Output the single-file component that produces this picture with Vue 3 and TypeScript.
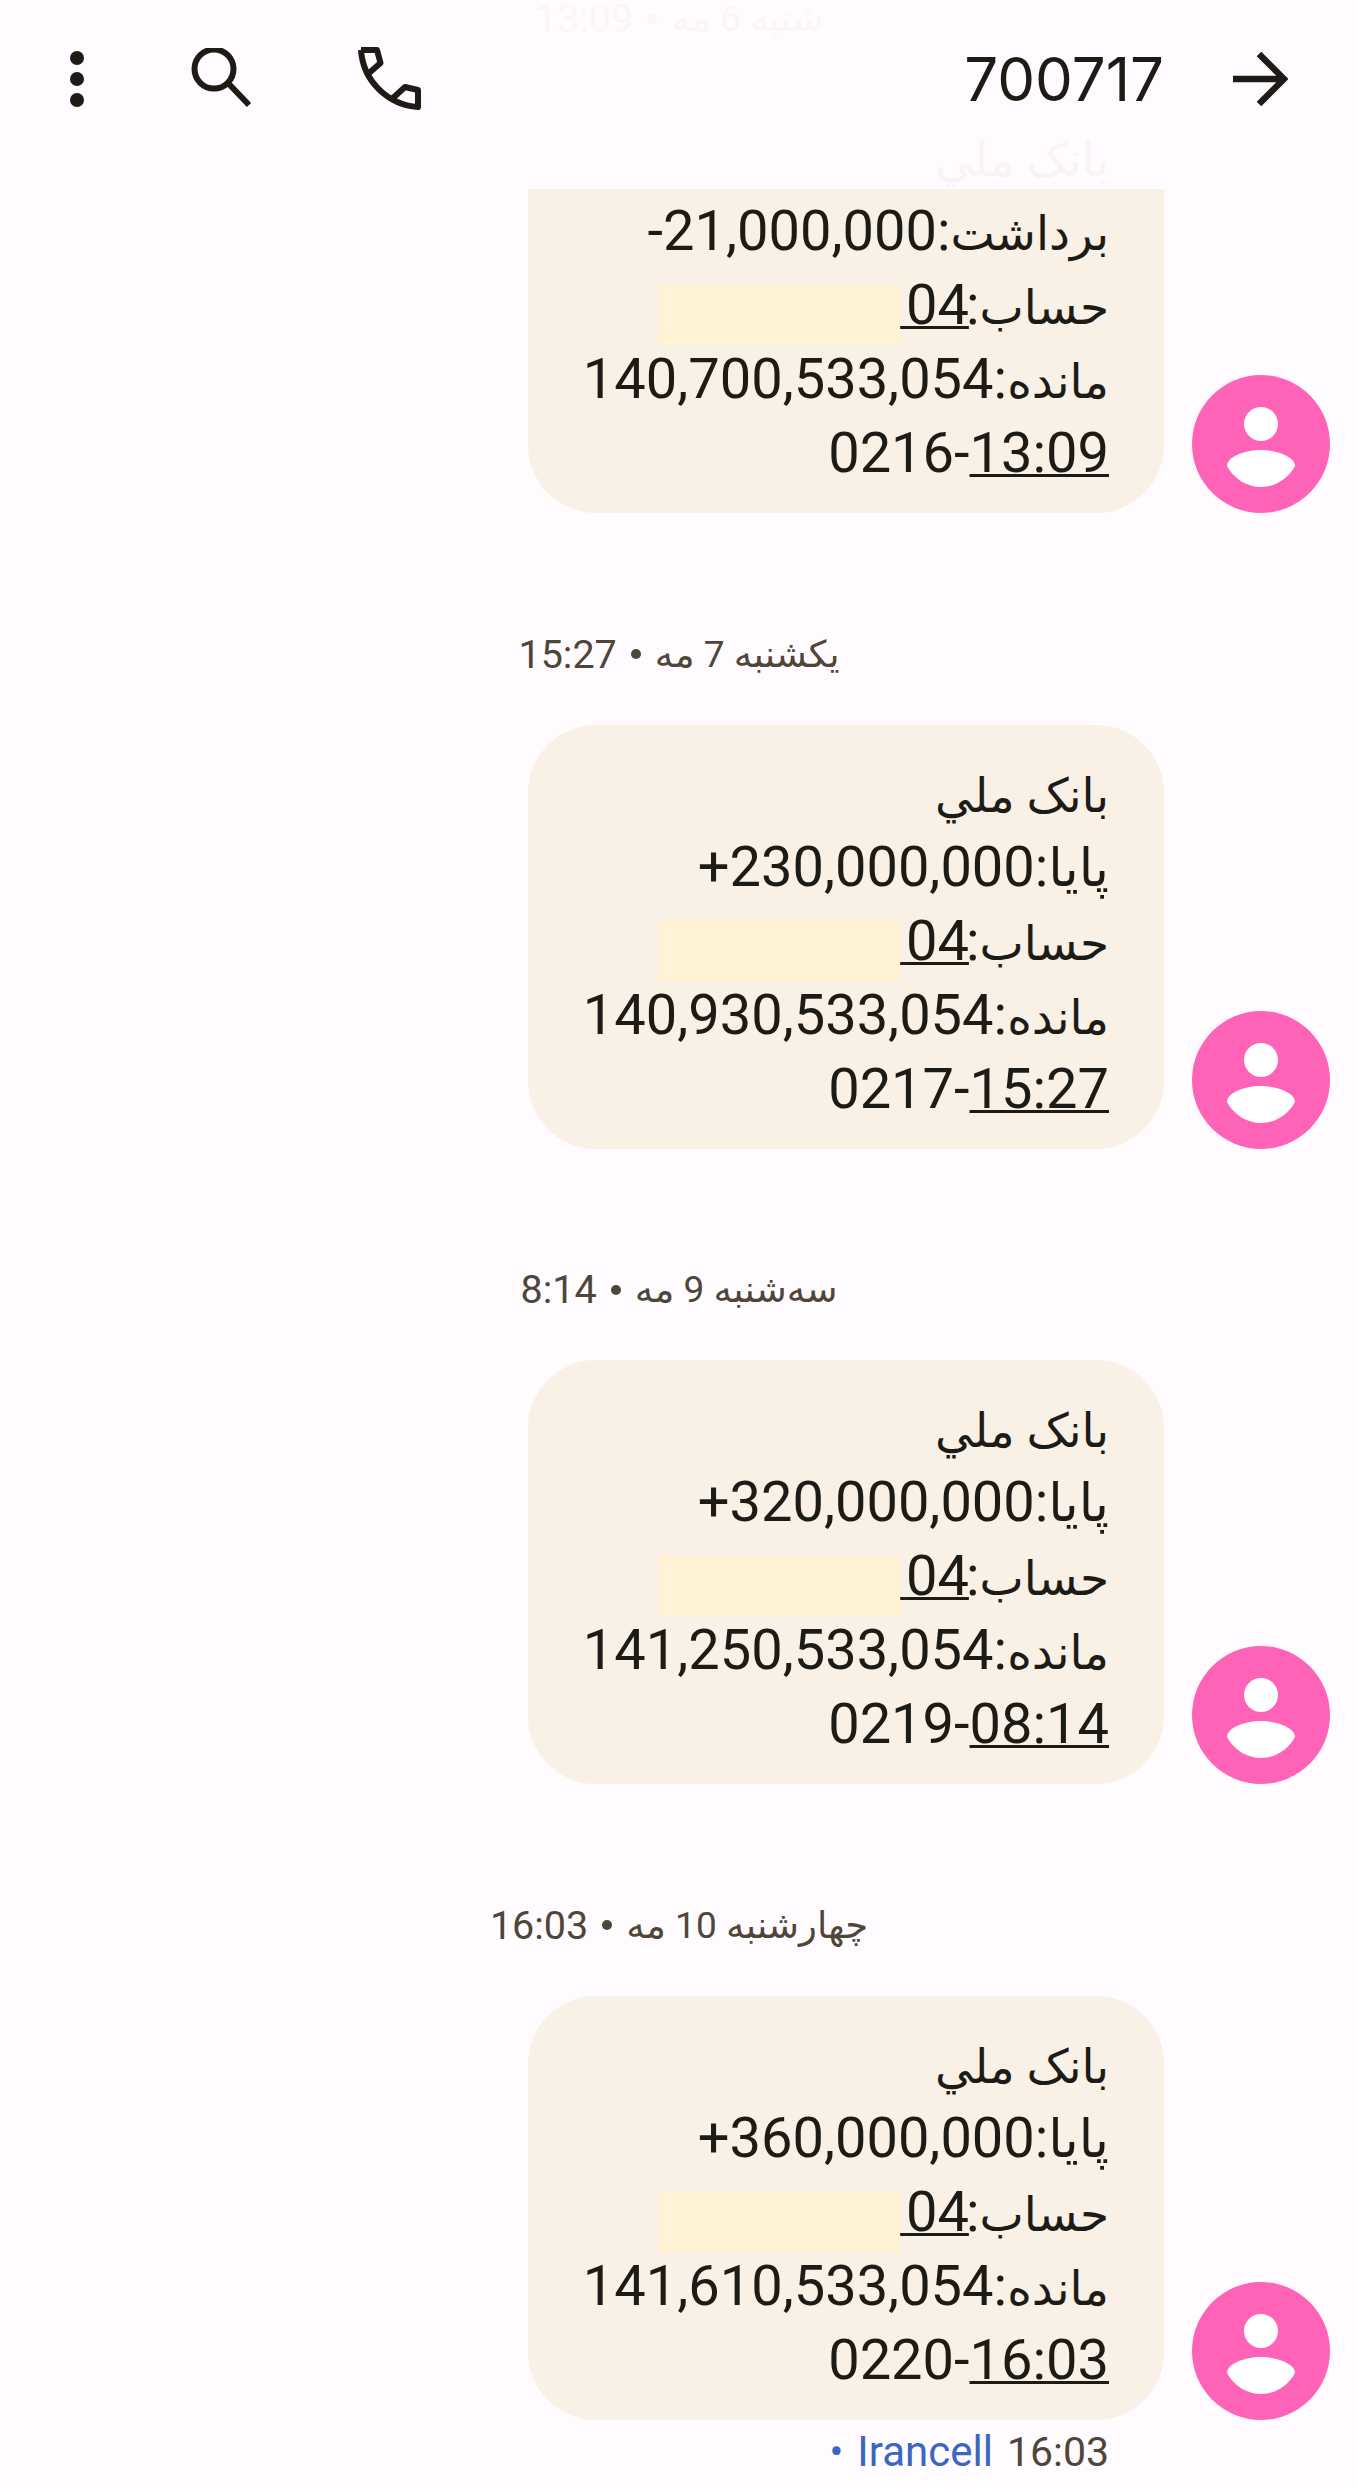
<script setup lang="ts">
interface Message {
  day: string;
  clock: string;
  title: string;
  amount: string;
  balance: string;
  time: string;
  serial: string;
}

const messages: Message[] = [
  { day: 'شنبه 6 مه', clock: '13:09', title: 'برداشت', amount: '21,000,000-', balance: '140,700,533,054', time: '13:09', serial: '0216' },
  { day: 'یکشنبه 7 مه', clock: '15:27', title: 'پايا', amount: '230,000,000+', balance: '140,930,533,054', time: '15:27', serial: '0217' },
  { day: 'سه‌شنبه 9 مه', clock: '8:14', title: 'پايا', amount: '320,000,000+', balance: '141,250,533,054', time: '08:14', serial: '0219' },
  { day: 'چهارشنبه 10 مه', clock: '16:03', title: 'پايا', amount: '360,000,000+', balance: '141,610,533,054', time: '16:03', serial: '0220' },
];
</script>

<template>
  <div class="page">
    <header class="topbar">
      <div class="topbar__actions">
        <svg class="icon" width="14" height="56" viewBox="0 0 14 56" fill="#1d1b16">
          <circle cx="7" cy="7" r="7" />
          <circle cx="7" cy="28" r="7" />
          <circle cx="7" cy="49" r="7" />
        </svg>
        <svg class="icon" width="62" height="62" viewBox="0 0 62 62" fill="none" stroke="#1d1b16" stroke-width="6">
          <circle cx="24" cy="21" r="19.5" />
          <path d="M38 35L59 57" />
        </svg>
        <svg class="icon" width="64" height="64" viewBox="0 0 64 64" fill="none" stroke="#1d1b16" stroke-width="6" stroke-linejoin="round">
          <path d="M3 3C5 34 30 58 60 60V43L47 40 35 51" />
          <path d="M3 3H19L22.5 16 10 27" />
        </svg>
      </div>
      <div class="topbar__title">
        <span class="topbar__number">700717</span>
        <svg class="icon" width="56" height="54" viewBox="0 0 56 54" fill="none" stroke="#1d1b16" stroke-width="6.5">
          <path d="M1 27H51" />
          <path d="M27 2L52 27 27 52" />
        </svg>
      </div>
    </header>

    <section v-for="msg in messages" :key="msg.serial" class="message">
      <div class="message__date" dir="rtl">
        <span>{{ msg.day }}</span>
        <span class="message__dot"></span>
        <span class="message__clock">{{ msg.clock }}</span>
      </div>
      <div class="message__row">
        <div class="bubble" dir="rtl">
          <div><span class="fa">بانک ملي</span></div>
          <div><span class="fa" :class="{ 'fa--wide': msg.title === 'پايا' }">{{ msg.title }}</span>:{{ msg.amount }}</div>
          <div><span class="fa">حساب</span>:<span class="link link--account">04&#8202;</span><span class="redacted"></span></div>
          <div><span class="fa">مانده</span>:{{ msg.balance }}</div>
          <div><span class="link link--isolated">{{ msg.time }}</span>-{{ msg.serial }}</div>
        </div>
        <svg class="avatar" width="138" height="138" viewBox="0 0 138 138">
          <circle cx="69" cy="69" r="69" fill="#ff63b8" />
          <circle cx="69" cy="49" r="17" fill="#fff" />
          <path d="M35 91C35 82 52 75 69 75C86 75 103 82 103 91C96 104 83 112 69 112C55 112 42 104 35 91Z" fill="#fff" />
        </svg>
      </div>
    </section>

    <footer class="status">
      <span class="status__dot">•</span>
      <span class="status__sim">Irancell</span>
      <span>16:03</span>
    </footer>
  </div>
</template>

<style scoped>
.page {
  position: relative;
  height: 2488px;
  overflow: hidden;
  background: #fffbfe;
  font-family: Roboto, 'DejaVu Sans', sans-serif;
  color: #1d1b16;
}

.topbar {
  position: absolute;
  top: 0;
  left: 0;
  right: 0;
  height: 189px;
  padding: 0 70px 31px 70px;
  box-sizing: border-box;
  display: flex;
  align-items: center;
  justify-content: space-between;
  background: rgba(255, 251, 254, 0.97);
}

.topbar__actions {
  display: flex;
  align-items: center;
  gap: 106px;
}

.topbar__title {
  display: flex;
  align-items: center;
  gap: 68px;
}

.topbar__number {
  font-family: Inter, sans-serif;
  font-size: 60px;
  line-height: 64px;
}

.icon {
  display: block;
  flex-shrink: 0;
}

.message {
  padding-bottom: 122.5px;
}

.message:last-of-type {
  padding-bottom: 0;
}

.message__date {
  display: flex;
  justify-content: center;
  align-items: center;
  gap: 14px;
  height: 37px;
  margin-bottom: 52px;
  font-size: 37px;
  line-height: 37px;
  color: #4f4539;
}

.message__dot {
  width: 10px;
  height: 10px;
  border-radius: 50%;
  background: #4f4539;
}

.message__clock {
  font-size: 39.5px;
}

.message__row {
  display: flex;
  justify-content: flex-end;
  align-items: flex-end;
  gap: 28px;
  padding-right: 28px;
}

.bubble {
  width: 636px;
  height: 424px;
  box-sizing: border-box;
  padding: 31px 55px 0;
  border-radius: 68px;
  background: #f9f0e6;
  font-size: 56px;
  line-height: 74px;
}

.fa {
  font-size: 47px;
  line-height: 1;
}

.fa--wide {
  font-size: 52px;
}

.link {
  text-decoration: underline;
  text-decoration-thickness: 3px;
}

.link--isolated {
  unicode-bidi: isolate;
}

.link--account {
  margin-right: -3px;
}

.redacted {
  display: inline-block;
  width: 241px;
  height: 60px;
  margin-bottom: -21px;
  background: #fff3d3;
}

.avatar {
  display: block;
  flex-shrink: 0;
}

.status {
  display: flex;
  justify-content: flex-end;
  align-items: center;
  gap: 14px;
  height: 44px;
  margin-top: 10px;
  padding-right: 249px;
  font-size: 41px;
  line-height: 44px;
  color: #4f4539;
}

.status__dot,
.status__sim {
  color: #3a66c4;
}

.status__sim {
  font-size: 42px;
}
</style>

<style>
body {
  background: #fffbfe;
}
</style>
